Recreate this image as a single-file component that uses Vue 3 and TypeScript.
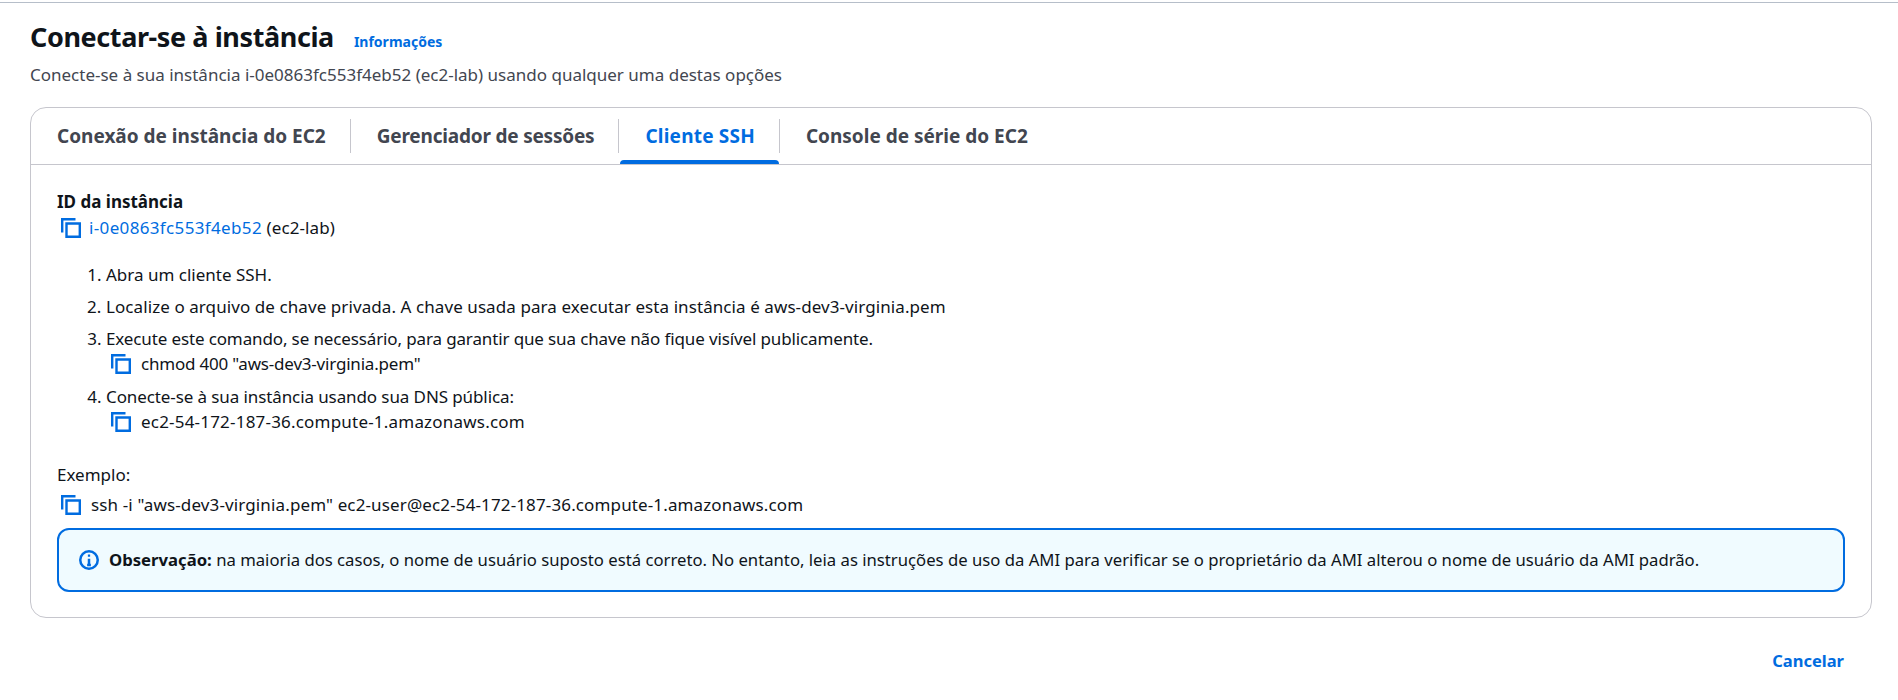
<script setup lang="ts">
const tabs = [
  { label: 'Conexão de instância do EC2', active: false },
  { label: 'Gerenciador de sessões', active: false },
  { label: 'Cliente SSH', active: true },
  { label: 'Console de série do EC2', active: false },
]
</script>

<template>
  <div class="page">
    <div class="topline"></div>
    <header class="head">
      <div class="title-row">
        <h1>Conectar-se à instância</h1>
        <a class="info">Informações</a>
      </div>
      <p class="desc">Conecte-se à sua instância i-0e0863fc553f4eb52 (ec2-lab) usando qualquer uma destas opções</p>
    </header>

    <section class="card">
      <div class="tabs">
        <div v-for="t in tabs" :key="t.label" class="tab" :class="{ active: t.active }">
          <span class="tab-label">{{ t.label }}</span>
        </div>
      </div>
      <div class="body">
        <div class="label">ID da instância</div>
        <div class="copy-row id-row">
          <svg class="copy" viewBox="0 0 20 20"><path d="M1.2 14.5V1.2H14.5M5.5 5.5H18.8V18.8H5.5Z" /></svg>
          <a class="link">i-0e0863fc553f4eb52</a>&nbsp;(ec2-lab)
        </div>
        <ol class="steps">
          <li>Abra um cliente SSH.</li>
          <li class="s2">Localize o arquivo de chave privada. A chave usada para executar esta instância é aws-dev3-virginia.pem</li>
          <li class="s3-item">
            <span class="s3">Execute este comando, se necessário, para garantir que sua chave não fique visível publicamente.</span>
            <div class="copy-row sub chmod">
              <svg class="copy" viewBox="0 0 20 20"><path d="M1.2 14.5V1.2H14.5M5.5 5.5H18.8V18.8H5.5Z" /></svg>
              chmod 400 "aws-dev3-virginia.pem"
            </div>
          </li>
          <li>
            <span class="s4">Conecte-se à sua instância usando sua DNS pública:</span>
            <div class="copy-row sub dns">
              <svg class="copy" viewBox="0 0 20 20"><path d="M1.2 14.5V1.2H14.5M5.5 5.5H18.8V18.8H5.5Z" /></svg>
              ec2-54-172-187-36.compute-1.amazonaws.com
            </div>
          </li>
        </ol>
        <div class="example">Exemplo:</div>
        <div class="copy-row ex-row">
          <svg class="copy" viewBox="0 0 20 20"><path d="M1.2 14.5V1.2H14.5M5.5 5.5H18.8V18.8H5.5Z" /></svg>
          ssh -i "aws-dev3-virginia.pem" ec2-user@ec2-54-172-187-36.compute-1.amazonaws.com
        </div>
        <div class="note">
          <svg class="info-icon" viewBox="0 0 16 16">
            <circle cx="8" cy="8" r="7" />
            <path d="M8 7V12M6.5 12H9.5" />
            <path class="dot" d="M7.1 3.6H8.9V5.4H7.1Z" />
          </svg>
          <span><strong>Observação:</strong> na maioria dos casos, o nome de usuário suposto está correto. No entanto, leia as instruções de uso da AMI para verificar se o proprietário da AMI alterou o nome de usuário da AMI padrão.</span>
        </div>
      </div>
    </section>

    <footer class="foot"><a class="cancel">Cancelar</a></footer>
  </div>
</template>

<style>
html, body { margin: 0; background: #fff; }
</style>

<style scoped>
.page {
  box-sizing: border-box;
  height: 700px;
  overflow: hidden;
  padding: 2px 0 0;
  font-family: "Noto Sans", Roboto, sans-serif;
  font-size: 17px;
  line-height: 20px;
  color: #0f141a;
}
.topline { height: 1px; background: #b6bec9; }
.head { padding: 16px 26px 0 30px; }
.title-row { display: flex; align-items: baseline; height: 36px; }
h1 {
  margin: 0;
  font-size: 27px;
  letter-spacing: -0.4px;
  line-height: 36px;
  font-weight: 700;
}
.info {
  margin-left: 20px;
  font-size: 14px;
  font-weight: 700;
  color: #006ce0;
}
.desc { margin: 10px 0 0; color: #424650; }
.card {
  box-sizing: border-box;
  height: 511px;
  margin: 22px 26px 0 30px;
  border: 1px solid #c6c6cd;
  border-radius: 16px;
}
.tabs {
  box-sizing: border-box;
  display: flex;
  height: 57px;
  border-bottom: 1px solid #c6c6cd;
}
.tab {
  position: relative;
  display: flex;
  align-items: center;
  height: 56px;
  padding: 0 25px 0 26px;
  font-size: 19px;
  font-weight: 700;
  color: #424650;
}
.tab:nth-child(2) { letter-spacing: -0.2px; }
.tab:nth-child(3) { letter-spacing: 0.2px; }
.tab::after {
  content: "";
  position: absolute;
  right: 0;
  top: 11px;
  height: 34px;
  width: 1px;
  background: #c6c6cd;
}
.tab:last-child::after { display: none; }
.tab.active { color: #006ce0; }
.tab.active::before {
  content: "";
  position: absolute;
  left: 1px;
  right: 1px;
  bottom: 0;
  height: 4px;
  border-radius: 4px 4px 0 0;
  background: #006ce0;
}
.body { padding: 27px 26px 0 26px; }
.label { font-weight: 700; }
.copy-row { display: flex; align-items: center; height: 20px; }
.copy {
  width: 20px;
  height: 20px;
  flex: none;
  fill: none;
  stroke: #006ce0;
  stroke-width: 2.4;
  margin-right: 8px;
}
.sub .copy, .ex-row .copy { margin-right: 10px; }
.id-row { padding-left: 4px; margin-top: 6px; letter-spacing: 0.1px; }
.link { color: #006ce0; letter-spacing: 0.35px; }
.steps { margin: 27px 0 0; padding: 0 0 0 49px; }
.steps li { margin-bottom: 12px; }
.steps .s3-item { margin-bottom: 13px; }
.s2 { letter-spacing: 0.08px; }
.s3 { letter-spacing: -0.13px; }
.s4 { letter-spacing: -0.1px; }
.chmod { letter-spacing: -0.2px; }
.dns { letter-spacing: 0.2px; }
.sub { margin: 5px 0 0 5px; }
.steps li:last-child { margin-bottom: 0; }
.example { margin-top: 33px; }
.ex-row { padding-left: 4px; margin-top: 10px; letter-spacing: 0.13px; }
.note {
  box-sizing: border-box;
  display: flex;
  align-items: center;
  height: 64px;
  margin-top: 13px;
  padding: 0 20px;
  border: 2px solid #006ce0;
  border-radius: 12px;
  background: #f0fbff;
  font-size: 16.7px;
}
.info-icon {
  width: 20px;
  height: 20px;
  flex: none;
  margin-right: 10px;
  fill: none;
  stroke: #006ce0;
  stroke-width: 2;
}
.info-icon .dot { fill: #006ce0; stroke: none; }
.foot { display: flex; justify-content: flex-end; padding: 33px 54px 0 0; }
.cancel { font-size: 16.5px; font-weight: 700; color: #006ce0; }
</style>
